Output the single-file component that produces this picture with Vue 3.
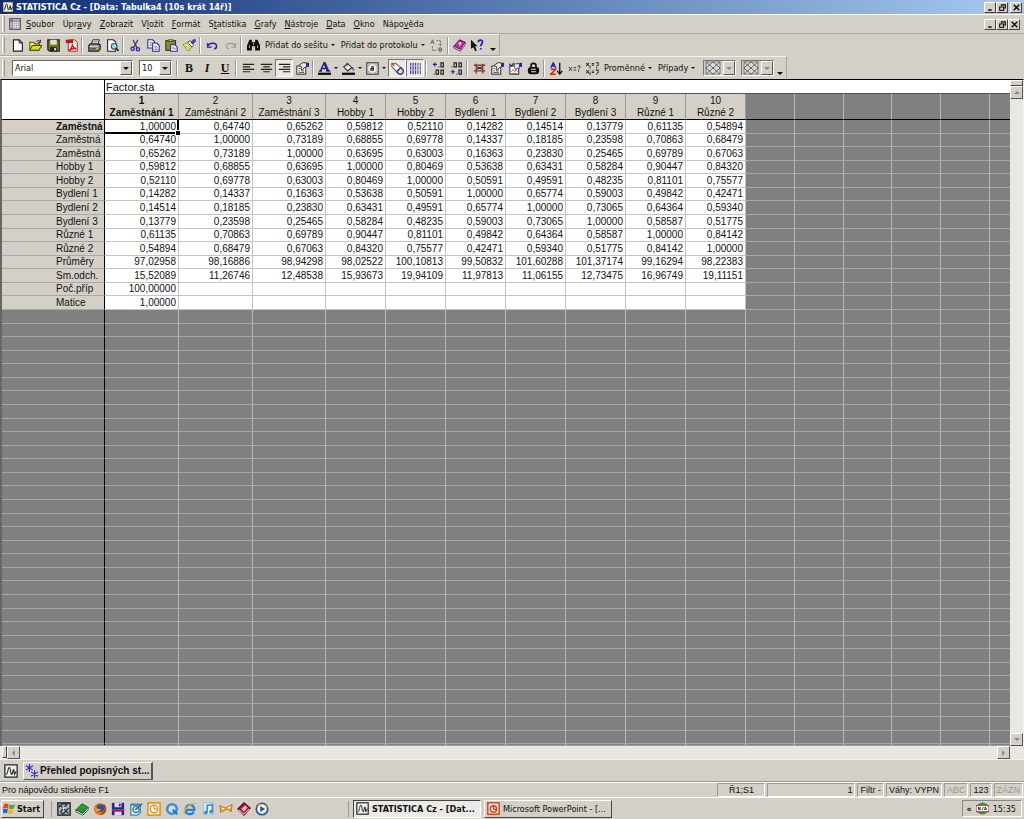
<script setup>
const icons = {
  app: '<rect x="1" y="1" width="14" height="14" fill="#eee" stroke="#222" stroke-width="1.4"/><path d="M2 12C5 12 4 4 6 4S7 12 9 12M9 12l2-6 1 6 2-4" fill="none" stroke="#222" stroke-width="1.200"/>',
  sheet: '<rect x="1" y="1" width="14" height="14" fill="#e8e8f4" stroke="#445" stroke-width="1.5"/><path d="M1 4h14M4 1v14" stroke="#556" stroke-width="1.300"/><path d="M7 5v9M10 5v9M13 5v9M5 7h9M5 10h9M5 13h9" stroke="#aab" stroke-width="1"/>',
  new: '<path d="M3 1h7l4 4v10H3z" fill="#fff" stroke="#222" stroke-width="1.400"/><path d="M10 1v4h4" fill="none" stroke="#222" stroke-width="1.200"/>',
  open: '<path d="M1 14V4h5l1 2h6v3" fill="#f4ee60" stroke="#555500" stroke-width="1.300"/><path d="M1 14l3-6h12l-4 6z" fill="#e0d62a" stroke="#555500" stroke-width="1.300"/><path d="M9 3c2-2 4-1 5 1m0-3v3h-3" fill="none" stroke="#222" stroke-width="1.200"/>',
  save: '<path d="M1 1h14v14H3l-2-2z" fill="#77770c" stroke="#222" stroke-width="1.500"/><rect x="4" y="1" width="8" height="6" fill="#ddd"/><rect x="4" y="10" width="8" height="5" fill="#222"/><rect x="9" y="11" width="2" height="3" fill="#eee"/>',
  pdf: '<path d="M4 1h8l3 3v11H4z" fill="#fff" stroke="#922" stroke-width="1.200"/><rect x="1" y="1" width="9" height="4" fill="#c11"/><path d="M5 14c3-2 4-6 4-8 0 3 2 5 5 6-3-1-6 0-9 2z" fill="none" stroke="#d11" stroke-width="1.700"/>',
  print: '<path d="M4 7l2-6h8l-2 6" fill="#fff" stroke="#222" stroke-width="1.200"/><path d="M7 3h5M6 5h5" stroke="#777"/><path d="M1 8l2-2h10l2 1v5l-2 3H1z" fill="#8c8c8c" stroke="#222" stroke-width="1.500"/><path d="M2 9h10" stroke="#eee"/><path d="M3 12h7" stroke="#333"/><path d="M10 12h2" stroke="#dd0" stroke-width="1.500"/>',
  preview: '<path d="M2 1h7l3 3v11H2z" fill="#fff" stroke="#222" stroke-width="1.300"/><circle cx="10" cy="9" r="3.500" fill="#9dd" stroke="#356" stroke-width="1.400"/><path d="M12.500 11.500l3 3" stroke="#222" stroke-width="2"/>',
  cut: '<path d="M5 1l5 10M11 1L6 10" stroke="#336" stroke-width="1.500"/><circle cx="4.500" cy="12" r="2" fill="none" stroke="#22b" stroke-width="1.600"/><circle cx="11" cy="12.500" r="2" fill="none" stroke="#22b" stroke-width="1.600"/>',
  copy: '<path d="M1 1h6l2 2v8H1z" fill="#fff" stroke="#229" stroke-width="1.300"/><path d="M7 5h5l3 3v7H7z" fill="#fff" stroke="#229" stroke-width="1.300"/><path d="M3 4h3M3 6h3M3 8h3M9 9h4M9 11h4M9 13h4" stroke="#66a"/>',
  paste: '<rect x="1" y="2" width="12" height="12" fill="#8d8b27" stroke="#333" stroke-width="1.300"/><path d="M4 3h6V1H4z" fill="#dd6" stroke="#333"/><path d="M7 7h5l3 3v5H7z" fill="#fff" stroke="#229" stroke-width="1.300"/><path d="M9 10h3M9 12h5" stroke="#66a"/>',
  brush: '<path d="M0 7l6-3 5 5-4 6-3-3z" fill="#eee87a" stroke="#884" stroke-width="1.200"/><path d="M3 8l4 4M5 6l4 4" stroke="#994"/><path d="M6 4l3-2 4 6-2 2z" fill="#fff" stroke="#333"/><path d="M10 4l4-4 2 2-4 4z" fill="#44c" stroke="#226"/>',
  undo: '<path d="M2 5v5h5M2 9c2-5 11-5 11 0 0 2-1 3-3 3" fill="none" stroke="#22a" stroke-width="1.800"/>',
  redo: '<path d="M14 5v5H9M14 9C12 4 3 4 3 9c0 2 1 3 3 3" fill="none" stroke="#999" stroke-width="1.500"/>',
  find: '<path d="M3 1h3v3h4V1h3l3 7v6h-6V9H6v5H0V8z" fill="#111"/><path d="M3 8v3M13 8v3M8 5v2" stroke="#ccc"/>',
  swap: '<path d="M1 6l2-5 2 5M2 4h2M11 11h3v4h-3zM11 13h3" fill="none" stroke="#555"/><path d="M8 2h5v6M11 6l2 2 2-2M3 9v5h5" fill="none" stroke="#555" stroke-dasharray="2 1"/>',
  book: '<path d="M1 9l7-8 7 3-6 9z" fill="#c22ab0" stroke="#515" stroke-width="1.200"/><path d="M1 9l8 4 6-9v3l-6 8-8-4z" fill="#fff" stroke="#515"/><path d="M7 6c1-3 4-1 2 0l-1 2" fill="none" stroke="#fe4" stroke-width="1.400"/>',
  help: '<path d="M0 1v11l3-2 2 5 2-1-2-5h3z" fill="#111"/><path d="M9 4c0-4 6-3 5 0 0 2-2 2-2 5M12 11v2" fill="none" stroke="#22b" stroke-width="2.200"/>',
  left: '<path d="M1 3h14M1 6h9M1 9h14M1 12h9" stroke="#222" stroke-width="1.500"/>',
  center: '<path d="M1 3h14M4 6h8M1 9h14M4 12h8" stroke="#222" stroke-width="1.500"/>',
  right: '<path d="M1 3h14M6 6h9M1 9h14M6 12h9" stroke="#222" stroke-width="1.500"/>',
  props: '<rect x="1" y="5" width="11" height="10" fill="#fff" stroke="#333" stroke-width="1.300"/><path d="M3 8h2M3 11h2M6 11h4M3 13h7" stroke="#333"/><path d="M4 4l4-3h5v5l-3 1-2 3-2-1 1-3-2-1z" fill="#e8e6e0" stroke="#333" stroke-width="1.200"/><path d="M13 1h3v5h-3z" fill="#22a"/>',
  fontcolor: '<path d="M3 11L7.500 1h1L13 11M5 8h6M1 11h4M10 11h5" stroke="#228" stroke-width="1.800" fill="none"/><path d="M8 2l4 9" stroke="#228" stroke-width="2.500"/><path d="M0 14.500h16" stroke="#111" stroke-width="2.800"/>',
  fill: '<path d="M2 6l5-4 5 5-5 4z" fill="#fff" stroke="#222" stroke-width="1.300"/><path d="M6 1v5" stroke="#222"/><path d="M12 6c3 1 3 4 2 5-1-1-1-3-2-5z" fill="#22a"/><path d="M0 14.500h16" stroke="#111" stroke-width="2.800"/>',
  box: '<rect x="1" y="1" width="14" height="14" fill="#eee" stroke="#333" stroke-width="1.300"/><path d="M4 1v14M12 1v14M1 4h14M1 12h14" stroke="#888"/><rect x="4" y="4" width="8" height="8" fill="#fff"/><path d="M6 6h3v4H6V8h3" fill="none" stroke="#222" stroke-width="1.300"/>',
  tag: '<path d="M1 2l5 0 6 5-5 5-6-6z" fill="#fff" stroke="#764" stroke-width="1.400"/><path d="M7 12l5-5 3 3v3l-2 2h-3z" fill="#dde" stroke="#226" stroke-width="1.500"/><path d="M1 1l3 4" stroke="#b44" stroke-width="1.500"/>',
  grid: '<rect x="0" y="0" width="16" height="16" fill="#fff"/><path d="M2 1v14M5 1v14M8 1v14" stroke="#44b" stroke-width="1.800"/><path d="M11 1v14M14 1v14" stroke="#777" stroke-width="1.800"/><path d="M1 5h14M1 10h14" stroke="#ccd" stroke-width="1"/>',
  incdec: '<path d="M1 3h5M3.500 0.500v5" stroke="#228" stroke-width="1.500"/><path d="M11 1h3v5h-3zM5 10h3v5H5zM11 10h3v5h-3zM8 6h1M2 15h1" fill="none" stroke="#222" stroke-width="1.400"/>',
  decdec: '<path d="M1 12h5M3.500 9.500v5" stroke="#228" stroke-width="1.500"/><path d="M5 1h3v5H5zM11 1h3v5h-3zM11 10h3v5h-3zM8 15h1M2 6h1" fill="none" stroke="#222" stroke-width="1.400"/>',
  hash: '<path d="M4 2v12M12 2v12M1 4h14M1 11h14" stroke="#833" stroke-width="1.600"/><path d="M5 6l6 3M11 6l-6 3" stroke="#222" stroke-width="1.300"/>',
  checkprops: '<rect x="1" y="5" width="11" height="10" fill="#fff" stroke="#333" stroke-width="1.300"/><path d="M3 12l2-3 2 3 2-3 2 3M3 14h7" stroke="#a44" fill="none"/><path d="M0 2l3 3 3-4" fill="none" stroke="#22a" stroke-width="1.500"/><path d="M6 3l3-1h4v5l-3 1-2 1-1-2z" fill="#e8e6e0" stroke="#333"/><path d="M13 1h3v5h-3z" fill="#22a"/>',
  lock: '<path d="M5 7V4c0-3 6-3 6 0v3" fill="none" stroke="#111" stroke-width="2"/><rect x="1" y="6" width="14" height="9" rx="4" fill="#111"/><path d="M5 9h6M5 12h6" stroke="#ddd" stroke-width="1.300"/>',
  sort: '<path d="M1 7l3-6 3 6M2 5h4" fill="none" stroke="#22b" stroke-width="1.700"/><path d="M1 9h6l-6 6h6" fill="none" stroke="#c22" stroke-width="1.700"/><path d="M12 1v13M9 11l3 4 3-4" fill="none" stroke="#111" stroke-width="1.600"/>',
  xeq: '<path d="M1 6l4 5M5 6l-4 5M7 7h3M7 10h3M12 6c0-2 3-2 3 0s-2 1-2 3M13 10v2" fill="none" stroke="#333" stroke-width="1.200"/>',
  xeq2: '<path d="M0 1l4 4M4 1L0 5M7 2h3M7 4h3M12 1h3v3l-2 1M0 10l4 4M4 10l-4 4M7 11h3M7 13h3M12 10h3v3l-2 1M5 5v3M13 6v2M5 13v3M13 15v1" fill="none" stroke="#333" stroke-width="1.300"/>',
  pattern: '<rect x="1" y="1" width="14" height="14" fill="#ddd" stroke="#777"/><path d="M1 1l14 14M15 1L1 15M8 1l7 7-7 7-7-7z" fill="none" stroke="#555"/>',
  stars: '<path d="M5 0v9M1 2l8 5M9 2L1 7M11 7v9M7 9l8 5M15 9l-8 5" stroke="#22d" stroke-width="1.300"/>',
  win: '<path d="M1 3c2-2 4-1 6 0L6 8C4 7 3 7 0 8z" fill="#e04a22"/><path d="M8 3c2 1 4 1 7 0l-2 5c-2 1-4 1-6 0z" fill="#4ba82e"/><path d="M0 9c2-1 4-1 6 0l-1 5c-2-1-4-1-5 0z" fill="#2c62d0"/><path d="M7 9c2 1 4 1 6 0l-1 5c-3 1-4 1-6 0z" fill="#f0b81c"/>',
  desk: '<rect x="1" y="1" width="14" height="14" fill="#a8b8b4" stroke="#223" stroke-width="1.600"/><path d="M2 6l4-4h6l-8 9 3 3 6-7M3 3l10 10" fill="none" stroke="#234" stroke-width="1.500"/><path d="M6 6l4 0-3 3z" fill="#fff"/>',
  gbook: '<path d="M1 9l7-7 7 4-6 7z" fill="#2c9b2c" stroke="#153"/><path d="M1 9l8 4 6-7v3l-6 6-8-4z" fill="#fff" stroke="#153"/>',
  fox: '<circle cx="8" cy="8" r="7" fill="#e47718"/><circle cx="8.500" cy="7" r="4.300" fill="#2c53a2"/><path d="M2 4c1 4 4 4 7 4-1 3-4 3-6 1z" fill="#f3a22b"/><path d="M12 3c4 4 2 10-3 11" fill="none" stroke="#b33c10" stroke-width="2"/>',
  disk: '<rect x="1" y="1" width="14" height="14" fill="#23239c"/><rect x="4" y="1" width="8" height="5" fill="#ddd"/><rect x="9" y="2" width="2" height="3" fill="#23239c"/><rect x="1" y="8" width="14" height="2" fill="#d22"/><rect x="4" y="11" width="8" height="4" fill="#dde"/>',
  note: '<path d="M2 3h11v9l-3 3H2z" fill="#e7f3fa" stroke="#48a" stroke-width="1.500"/><path d="M2 3h11" stroke="#48a" stroke-width="2.500"/><circle cx="8" cy="8.500" r="3.500" fill="none" stroke="#38a" stroke-width="1.700"/><path d="M7 9l8-7" stroke="#369" stroke-width="1.700"/>',
  clock: '<rect x="1" y="1" width="14" height="14" fill="#fff4dc" stroke="#e09a2c" stroke-width="2"/><circle cx="8" cy="8" r="4.300" fill="#fff" stroke="#d8902a" stroke-width="1.600"/><path d="M8 5v3h3" fill="none" stroke="#a60"/>',
  qt: '<circle cx="8" cy="8" r="5.500" fill="#cde" stroke="#3d8fd0" stroke-width="3"/><path d="M9 9l5 5" stroke="#27a" stroke-width="2.500"/>',
  ie: '<path d="M4 9h9c0-8-10-7-10 0 0 6 8 6 9 2" fill="none" stroke="#2a7fd0" stroke-width="2.600"/><path d="M2 14C-1 10 9 0 15 2" fill="none" stroke="#e4ae2c" stroke-width="1.500"/>',
  music: '<rect x="3" y="1" width="11" height="13" fill="#dceeff" stroke="#8bc"/><path d="M7 12V4l6-1v8" fill="none" stroke="#2f86d0" stroke-width="1.700"/><circle cx="5.500" cy="12" r="2" fill="#2f86d0"/><circle cx="11.500" cy="11" r="2" fill="#2f86d0"/>',
  bow: '<path d="M1 4l6 3 2-1 6-3-1 8-5-3-2 1-5 3z" fill="#f2b438" stroke="#b66c14"/><path d="M4 7l2 1M10 7l3-1" stroke="#fff" stroke-width="1.300"/>',
  rbook: '<path d="M1 8l7-7 7 6-7 8z" fill="#c3122e" stroke="#412" stroke-width="1.300"/><path d="M5 8l4-4 3 2-4 5z" fill="#f2c4cc"/><path d="M2 9l6 5 6-6" fill="none" stroke="#fff"/>',
  media: '<circle cx="8" cy="8" r="6.500" fill="#eef4fb" stroke="#345a92" stroke-width="2"/><path d="M3 4l3-2M12 3l2 3" stroke="#e08030" stroke-width="2"/><path d="M6 4.500L11.500 8 6 11.500z" fill="#27509c"/>',
  ppt: '<rect x="1" y="1" width="14" height="14" fill="#fbe3d8" stroke="#c8482a" stroke-width="1.800"/><circle cx="8" cy="8.500" r="3.800" fill="#fff" stroke="#d4502c" stroke-width="2"/><path d="M8 4v5h4" fill="none" stroke="#c03c1c" stroke-width="1.500"/>',
  na: '<circle cx="8" cy="8" r="7.500" fill="#2d9a38"/><rect x="0" y="4" width="16" height="8" rx="2" fill="#fff" stroke="#d22" stroke-width="1.400"/><path d="M3 10V6l2 4V6M7.500 10l1.500-4M10.500 10l1-4 1.500 4M11 9h2" fill="none" stroke="#222"/>',
  min: '<path d="M4 12.500h6" stroke="#000" stroke-width="2.600"/>',
  restore: '<path d="M6 5V3h7v6h-2M6 3.500h7" fill="none" stroke="#000" stroke-width="1.800"/><rect x="3" y="7" width="7" height="6" fill="none" stroke="#000" stroke-width="1.800"/>',
  close: '<path d="M3 3l10 10M13 3L3 13" stroke="#000" stroke-width="2.200"/>',
}

const menus = [['', 'S', 'oubor'], ['Úpr', 'a', 'vy'], ['', 'Z', 'obrazit'], ['V', 'l', 'ožit'], ['', 'F', 'ormát'], ['S', 't', 'atistika'], ['', 'G', 'rafy'], ['', 'N', 'ástroje'], ['', 'D', 'ata'], ['', 'O', 'kno'], ['Nápo', 'v', 'ěda']]

const i = (icon, label) => ({ icon, label })
const standard = [
  [i('new', 'Nový'), i('open', 'Otevřít'), i('save', 'Uložit'), i('pdf', 'PDF')],
  [i('print', 'Tisk'), i('preview', 'Náhled')],
  [i('cut', 'Vyjmout'), i('copy', 'Kopírovat'), i('paste', 'Vložit'), i('brush', 'Kopírovat formát')],
  [i('undo', 'Zpět'), i('redo', 'Znovu')],
]
const formatA = [i('left', 'Vlevo'), i('center', 'Na střed'), { ...i('right', 'Vpravo'), on: true }, i('props', 'Formát buněk')]
const colours = [i('fontcolor', 'Barva písma'), i('fill', 'Barva výplně'), i('box', 'Ohraničení')]
const views = [i('tag', 'Popisky'), i('grid', 'Mřížka')]
const decimals = [i('incdec', 'Přidat desetinné místo'), i('decdec', 'Ubrat desetinné místo')]
const specs = [i('hash', 'Případ'), i('props', 'Vlastnosti'), i('checkprops', 'Výběr'), i('lock', 'Zámek')]
const calc = [i('sort', 'Seřadit'), i('xeq', 'Přepočet'), i('xeq2', 'Dávkový přepočet')]

const columns = ['Zaměstnání 1', 'Zaměstnání 2', 'Zaměstnání 3', 'Hobby 1', 'Hobby 2', 'Bydlení 1', 'Bydlení 2', 'Bydlení 3', 'Různé 1', 'Různé 2']
const data = [
  ['Zaměstná', '1,00000 0,64740 0,65262 0,59812 0,52110 0,14282 0,14514 0,13779 0,61135 0,54894'],
  ['Zaměstná', '0,64740 1,00000 0,73189 0,68855 0,69778 0,14337 0,18185 0,23598 0,70863 0,68479'],
  ['Zaměstná', '0,65262 0,73189 1,00000 0,63695 0,63003 0,16363 0,23830 0,25465 0,69789 0,67063'],
  ['Hobby 1', '0,59812 0,68855 0,63695 1,00000 0,80469 0,53638 0,63431 0,58284 0,90447 0,84320'],
  ['Hobby 2', '0,52110 0,69778 0,63003 0,80469 1,00000 0,50591 0,49591 0,48235 0,81101 0,75577'],
  ['Bydlení 1', '0,14282 0,14337 0,16363 0,53638 0,50591 1,00000 0,65774 0,59003 0,49842 0,42471'],
  ['Bydlení 2', '0,14514 0,18185 0,23830 0,63431 0,49591 0,65774 1,00000 0,73065 0,64364 0,59340'],
  ['Bydlení 3', '0,13779 0,23598 0,25465 0,58284 0,48235 0,59003 0,73065 1,00000 0,58587 0,51775'],
  ['Různé 1', '0,61135 0,70863 0,69789 0,90447 0,81101 0,49842 0,64364 0,58587 1,00000 0,84142'],
  ['Různé 2', '0,54894 0,68479 0,67063 0,84320 0,75577 0,42471 0,59340 0,51775 0,84142 1,00000'],
  ['Průměry', '97,02958 98,16886 98,94298 98,02522 100,10813 99,50832 101,60288 101,37174 99,16294 98,22383'],
  ['Sm.odch.', '15,52089 11,26746 12,48538 15,93673 19,94109 11,97813 11,06155 12,73475 16,96749 19,11151'],
  ['Poč.příp', '100,00000'],
  ['Matice', '1,00000'],
].map(([label, line]) => ({ label, cells: line.split(' ') }))
const spare = 6
const blankRows = 33

const launch = [i('desk', 'Plocha'), i('gbook', 'Slovník'), i('fox', 'Firefox'), i('disk', 'Commander'), i('note', 'Poznámky'), i('clock', 'Outlook'), i('qt', 'QuickTime'), i('ie', 'Internet Explorer'), i('music', 'Hudba'), i('bow', 'Hry'), i('rbook', 'Kniha'), i('media', 'Přehrávač')]
const winButtons = [i('min', 'Minimalizovat'), i('restore', 'Obnovit'), i('close', 'Zavřít')]
</script>

<template>
  <div class="app">
    <header class="title">
      <svg class="ico" viewBox="0 0 16 16" v-html="icons.app"></svg>
      <h1>STATISTICA Cz - [Data: Tabulka4 (10s krát 14ř)]</h1>
      <div class="wins">
        <button v-for="b in winButtons" :key="b.icon" :aria-label="b.label"><svg viewBox="0 0 16 16" v-html="icons[b.icon]"></svg></button>
      </div>
    </header>

    <nav class="menu">
      <span class="grip"></span>
      <svg class="ico" viewBox="0 0 16 16" v-html="icons.sheet"></svg>
      <button v-for="m in menus" :key="m.join('')" class="item">{{ m[0] }}<u>{{ m[1] }}</u>{{ m[2] }}</button>
      <div class="wins">
        <button v-for="b in winButtons" :key="b.icon" :aria-label="b.label"><svg viewBox="0 0 16 16" v-html="icons[b.icon]"></svg></button>
      </div>
    </nav>

    <div class="bar">
      <span class="grip"></span>
      <template v-for="(group, g) in standard" :key="g">
        <button v-for="b in group" :key="b.icon" class="tool" :aria-label="b.label"><svg viewBox="0 0 16 16" v-html="icons[b.icon]"></svg></button>
        <span class="sep"></span>
      </template>
      <button class="tool" aria-label="Najít"><svg viewBox="0 0 16 16" v-html="icons.find"></svg></button>
      <button class="drop">Přidat do sešitu<i class="tri"></i></button>
      <button class="drop">Přidat do protokolu<i class="tri"></i></button>
      <button class="tool" aria-label="Zaměnit"><svg viewBox="0 0 16 16" v-html="icons.swap"></svg></button>
      <span class="sep"></span>
      <button class="tool" aria-label="Rádce"><svg viewBox="0 0 16 16" v-html="icons.book"></svg></button>
      <button class="tool" aria-label="Co je to?"><svg viewBox="0 0 16 16" v-html="icons.help"></svg></button>
      <button class="more" aria-label="Další tlačítka"><i class="tri"></i></button>
    </div>

    <div class="bar format">
      <span class="grip"></span>
      <label class="combo font"><select aria-label="Písmo"><option>Arial</option></select><span class="arrow"><i class="tri"></i></span></label>
      <label class="combo size"><select aria-label="Velikost písma"><option>10</option></select><span class="arrow"><i class="tri"></i></span></label>
      <span class="sep"></span>
      <button class="tool letter"><b>B</b></button>
      <button class="tool letter"><em>I</em></button>
      <button class="tool letter"><u>U</u></button>
      <span class="sep"></span>
      <button v-for="b in formatA" :key="b.icon" class="tool" :class="{ on: b.on }" :aria-label="b.label"><svg viewBox="0 0 16 16" v-html="icons[b.icon]"></svg></button>
      <span class="sep"></span>
      <button v-for="b in colours" :key="b.icon" class="tool split" :aria-label="b.label"><svg viewBox="0 0 16 16" v-html="icons[b.icon]"></svg><i class="tri"></i></button>
      <button v-for="b in views" :key="b.icon" class="tool on" :aria-label="b.label"><svg viewBox="0 0 16 16" v-html="icons[b.icon]"></svg></button>
      <span class="sep"></span>
      <button v-for="b in decimals" :key="b.icon" class="tool" :aria-label="b.label"><svg viewBox="0 0 16 16" v-html="icons[b.icon]"></svg></button>
      <span class="sep"></span>
      <button v-for="b in specs" :key="b.icon" class="tool" :aria-label="b.label"><svg viewBox="0 0 16 16" v-html="icons[b.icon]"></svg></button>
      <span class="sep"></span>
      <button v-for="b in calc" :key="b.icon" class="tool" :aria-label="b.label"><svg viewBox="0 0 16 16" v-html="icons[b.icon]"></svg></button>
      <button class="drop">Proměnné<i class="tri"></i></button>
      <button class="drop">Případy<i class="tri"></i></button>
      <button v-for="n in 2" :key="n" class="pattern" :aria-label="'Vzorek ' + n"><svg viewBox="0 0 16 16" preserveAspectRatio="none" v-html="icons.pattern"></svg><span class="arrow"><i class="tri"></i></span></button>
      <button class="more" aria-label="Další tlačítka"><i class="tri"></i></button>
    </div>

    <main class="work">
      <div class="sheet">
        <table>
          <colgroup>
            <col class="c-label" /><col v-for="n in 2" :key="'a' + n" class="c-wide" /><col class="c-third" /><col v-for="n in 7" :key="'b' + n" class="c-std" />
            <col class="c-spare" /><col class="c-spare" /><col class="c-spare-s" /><col class="c-spare" /><col class="c-spare" /><col />
          </colgroup>
          <thead>
            <tr>
              <td rowspan="2" class="corner"></td>
              <th :colspan="columns.length + spare" class="file">Factor.sta</th>
            </tr>
            <tr class="heads">
              <th v-for="(c, n) in columns" :key="c" scope="col" :class="{ active: n === 0 }">{{ n + 1 }}<br />{{ c }}</th>
              <td v-for="n in spare" :key="n" class="void"></td>
            </tr>
          </thead>
          <tbody>
            <tr v-for="(r, y) in data" :key="y">
              <th scope="row" :class="{ active: y === 0 }">{{ r.label }}</th>
              <td v-for="(c, x) in columns" :key="c" :class="{ cursor: x === 0 && y === 0 }">{{ r.cells[x] }}</td>
              <td v-for="n in spare" :key="n" class="void"></td>
            </tr>
            <tr v-for="r in blankRows" :key="'blank' + r">
              <td class="void edge"></td>
              <td v-for="n in columns.length + spare" :key="n" class="void"></td>
            </tr>
          </tbody>
        </table>
      </div>
      <div class="vscroll">
        <span class="handle"></span>
        <button aria-label="Nahoru"><i class="tri up"></i></button>
        <span class="track"></span>
        <button aria-label="Dolů"><i class="tri"></i></button>
      </div>
    </main>
    <div class="hscroll">
      <span class="handle"></span>
      <button aria-label="Vlevo"><i class="tri prev"></i></button>
      <span class="track"></span>
      <button aria-label="Vpravo"><i class="tri next"></i></button>
    </div>

    <div class="tabs">
      <button class="home" aria-label="Analýzy"><svg viewBox="0 0 16 16" v-html="icons.app"></svg></button>
      <button class="tab"><svg viewBox="0 0 16 16" v-html="icons.stars"></svg>Přehled popisných st...</button>
    </div>

    <footer class="status">
      <span class="hint">Pro nápovědu stiskněte F1</span>
      <span class="cell pos">Ř1;S1</span>
      <span class="cell num">1</span>
      <span class="cell">Filtr -</span>
      <span class="cell">Váhy: VYPN</span>
      <span class="cell off">ABC</span>
      <span class="cell">123</span>
      <span class="cell off">ZÁZN</span>
    </footer>

    <div class="taskbar">
      <button class="start"><svg viewBox="0 0 16 16" v-html="icons.win"></svg>Start</button>
      <div class="launch">
        <button v-for="b in launch" :key="b.icon" :aria-label="b.label"><svg viewBox="0 0 16 16" v-html="icons[b.icon]"></svg></button>
      </div>
      <div class="tasks">
        <button class="task current"><svg viewBox="0 0 16 16" v-html="icons.app"></svg>STATISTICA Cz - [Dat...</button>
        <button class="task"><svg viewBox="0 0 16 16" v-html="icons.ppt"></svg>Microsoft PowerPoint - [...</button>
      </div>
      <div class="tray"><b>«</b><svg viewBox="0 0 16 16" v-html="icons.na"></svg><time>15:35</time></div>
    </div>
  </div>
</template>

<style>
body { background: #d4d0c8; overflow: hidden; }
</style>

<style scoped>
.app { height: 100vh; display: flex; flex-direction: column; background: #d4d0c8; color: #111; font: 9px/12px "DejaVu Sans Condensed", "DejaVu Sans", sans-serif; }
.app * { box-sizing: border-box; }
button { display: flex; align-items: center; padding: 0; margin: 0; border: 0; background: none; color: inherit; font: inherit; white-space: nowrap; flex: none; }
svg { display: block; flex: none; width: 13px; height: 13px; }
.tri { flex: none; width: 0; height: 0; border: solid transparent; border-width: 3px 3px 0; border-top-color: #111; }

.title { display: flex; align-items: center; flex: none; height: 14px; padding: 0 2px; gap: 2px; background: linear-gradient(90deg, #0f2d75, #a6caf0); color: #fff; }
.title h1 { margin: 0; flex: 1; font-size: 9px; line-height: 14px; font-weight: bold; white-space: nowrap; }
.ico { width: 12px; height: 12px; }
.wins { display: flex; margin-left: auto; }
.wins button { width: 12px; height: 11px; justify-content: center; background: #d4d0c8; border: 1px solid; border-color: #fff #444 #444 #fff; }
.wins button:last-child { margin-left: 2px; }
.menu .wins button:last-child { margin-left: 0; }
.wins svg { width: 9px; height: 9px; }

.menu { display: flex; align-items: center; flex: none; height: 20px; padding-right: 4px; border-top: 1px solid #fff; border-bottom: 1px solid #aaa79f; }
.menu .item { padding: 0 4px; }
.menu .ico { margin: 0 1px; }
.grip { flex: none; width: 3px; height: 16px; margin: 0 3px 0 2px; border: solid #9a968e; border-width: 0 1px; border-left-color: #fff; }

.bar { display: flex; align-items: center; align-self: flex-start; flex: none; height: 22px; border: solid #aaa79f; border-width: 0 1px 1px 0; border-top: 1px solid #f4f2ee; }
.format { height: 23px; border-bottom: 0; }
.sep { flex: none; width: 2px; height: 17px; margin: 0 2px 0 1px; border-left: 1px solid #999; border-right: 1px solid #fff; }
.tool { width: 18px; height: 18px; justify-content: center; }
.tool.on { background: #ebe9e4; border: 1px solid; border-color: #777 #fff #fff #777; }
.split { width: 24px; gap: 3px; }
.letter { font: bold 12px/14px "Liberation Serif", serif; }
.drop { gap: 3px; padding: 0 3px; }
.drop .tri, .split .tri { border-width: 2px 2px 0; }
.more { align-self: flex-end; padding: 4px 3px; }
.combo { display: flex; height: 16px; margin-left: 4px; background: #fff; border: 1px solid; border-color: #666 #fff #fff #666; flex: none; }
.combo select { appearance: none; flex: 1; min-width: 0; margin: 0; padding: 0 2px; border: 0; border-radius: 0; background: none; color: inherit; font: inherit; }
.font { width: 121px; }
.size { width: 33px; margin-left: 6px; margin-right: 3px; }
.arrow { display: flex; align-items: center; justify-content: center; width: 12px; background: #d4d0c8; border: 1px solid; border-color: #fff #555 #555 #fff; }
.pattern { width: 33px; height: 16px; margin-left: 5px; padding-left: 1px; border: 1px solid; border-color: #777 #fff #fff #777; justify-content: space-between; align-items: stretch; }
.pattern svg { width: 16px; height: 14px; }
.pattern .tri { border-top-color: #888; }

.work { flex: 1; min-height: 0; display: flex; border-top: 1px solid #000; border-left: 2px solid #666; border-right: 1px solid #f4f2ee; }
.sheet { flex: 1; min-width: 0; overflow: hidden; background: #808080; border-bottom: 1px solid #a0a0a0; }
table { width: 100%; table-layout: fixed; border-collapse: separate; border-spacing: 0; font: 10px/12px "Liberation Sans", Arial, sans-serif; }
.c-label { width: 103px; }
.c-wide { width: 74px; }
.c-third { width: 73px; }
.c-std { width: 60px; }
.c-spare { width: 49px; }
.c-spare-s { width: 48px; }
th, td { padding: 0; font-weight: normal; overflow: hidden; white-space: nowrap; }
.corner { background: #fff; border-right: 1px solid #000; border-bottom: 1px solid #000; }
.file { height: 14px; padding-left: 1px; background: #fff; border-bottom: 1px solid #555; text-align: left; font-size: 11px; }
.heads th { height: 26px; background: #d4d0c8; border-right: 1px solid #999; border-bottom: 1px solid #000; line-height: 12px; text-align: center; vertical-align: bottom; }
.heads .void { border-bottom-color: #000; }
.active, .heads .active { font-weight: bold; }
tbody tr { height: 14px; }
tbody tr:nth-child(7n+2), tbody tr:nth-child(7n+4), tbody tr:nth-child(7n+6) { height: 13px; }
tbody th { padding-left: 54px; background: #d4d0c8; border-right: 1px solid #000; border-bottom: 1px solid #a8a8a8; text-align: left; }
tbody td { padding-right: 2px; background: #fff; border-right: 1px solid #c4c4c4; border-bottom: 1px solid #c4c4c4; text-align: right; }
tbody th, tbody td { line-height: 12px; vertical-align: bottom; }
td.void { background: #808080; border-right: 1px solid #b8b8b8; border-bottom: 1px solid #a6a6a6; }
td.edge { border-right-color: #000; }
td.void:last-child { border-right: 0; }
td.cursor { position: relative; overflow: visible; box-shadow: inset -1px -1px #000; border-right-color: #000; border-bottom-color: #000; }
td.cursor::after { content: ""; position: absolute; right: -2px; bottom: -2px; width: 4px; height: 4px; background: #000; border: solid #fff; border-width: 1px 0 0 1px; }

.vscroll { display: flex; flex-direction: column; flex: none; width: 13px; background: #e9e7e2; }
.vscroll .handle { height: 6px; background: #d4d0c8; border: 1px solid; border-color: #fff #444 #444 #fff; }
.track { flex: 1; }
.vscroll button, .hscroll button { width: 13px; height: 13px; justify-content: center; background: #d4d0c8; border: 1px solid; border-color: #fff #555 #555 #fff; }
.vscroll .tri, .hscroll .tri { border-color: transparent; border-top-color: #888; }
.vscroll .up { border-width: 0 3px 3px; border-bottom-color: #888; }
.hscroll .prev { border-width: 3px 3px 3px 0; border-top-color: transparent; border-right-color: #888; }
.hscroll .next { border-width: 3px 0 3px 3px; border-top-color: transparent; border-left-color: #888; }
.hscroll { display: flex; flex: none; height: 14px; padding: 0 14px 1px 2px; background: #e9e7e2; border-bottom: 1px solid #f4f2ee; }
.hscroll .handle { width: 5px; background: #d4d0c8; border: 1px solid; border-color: #fff #444 #444 #fff; }

.tabs { display: flex; align-items: center; flex: none; height: 22px; padding: 0 3px; gap: 4px; border-bottom: 1px solid #999; }
.tabs svg { width: 14px; height: 14px; }
.home { width: 16px; height: 17px; justify-content: center; }
.tab { height: 18px; padding: 0 2px 0 1px; gap: 1px; border: 1px solid; border-color: #fff #555 #555 #fff; border-right-width: 2px; font: bold 10px/12px "Liberation Sans", Arial, sans-serif; }

.status { display: flex; align-items: center; flex: none; height: 16px; padding: 0 1px 0 2px; gap: 2px; border-top: 1px solid #fff; border-bottom: 1px solid #fff; font: 9px/12px "Liberation Sans", Arial, sans-serif; white-space: nowrap; }
.hint { flex: 1; }
.cell { padding: 0 2px; border: 1px solid; border-color: #999 #fff #fff #999; }
.pos { width: 48px; text-align: center; }
.num { width: 88px; text-align: right; }
.off { color: #999; }

.taskbar { display: flex; align-items: center; flex: none; height: 21px; padding: 0 2px 0 1px; }
.start { width: 43px; height: 18px; gap: 1px; padding-left: 1px; border: 1px solid; border-color: #fff #444 #444 #fff; font-weight: bold; }
.launch { display: flex; align-items: center; width: 298px; margin-left: 7px; padding-left: 3px; border: solid #999; border-width: 0 1px; }
.launch button { width: 18px; height: 16px; justify-content: center; }
.launch svg { width: 14px; height: 14px; }
.tasks { display: flex; flex: 1; gap: 3px; margin-left: 4px; }
.task { width: 128px; height: 18px; gap: 3px; padding: 0 2px; overflow: hidden; border: 1px solid; border-color: #fff #444 #444 #fff; }
.task.current { background: #eceae6; border-color: #444 #fff #fff #444; font-weight: bold; }
.tray { display: flex; align-items: center; gap: 4px; height: 17px; padding: 0 5px 0 3px; border: 1px solid; border-color: #888 #fff #fff #888; }
</style>
